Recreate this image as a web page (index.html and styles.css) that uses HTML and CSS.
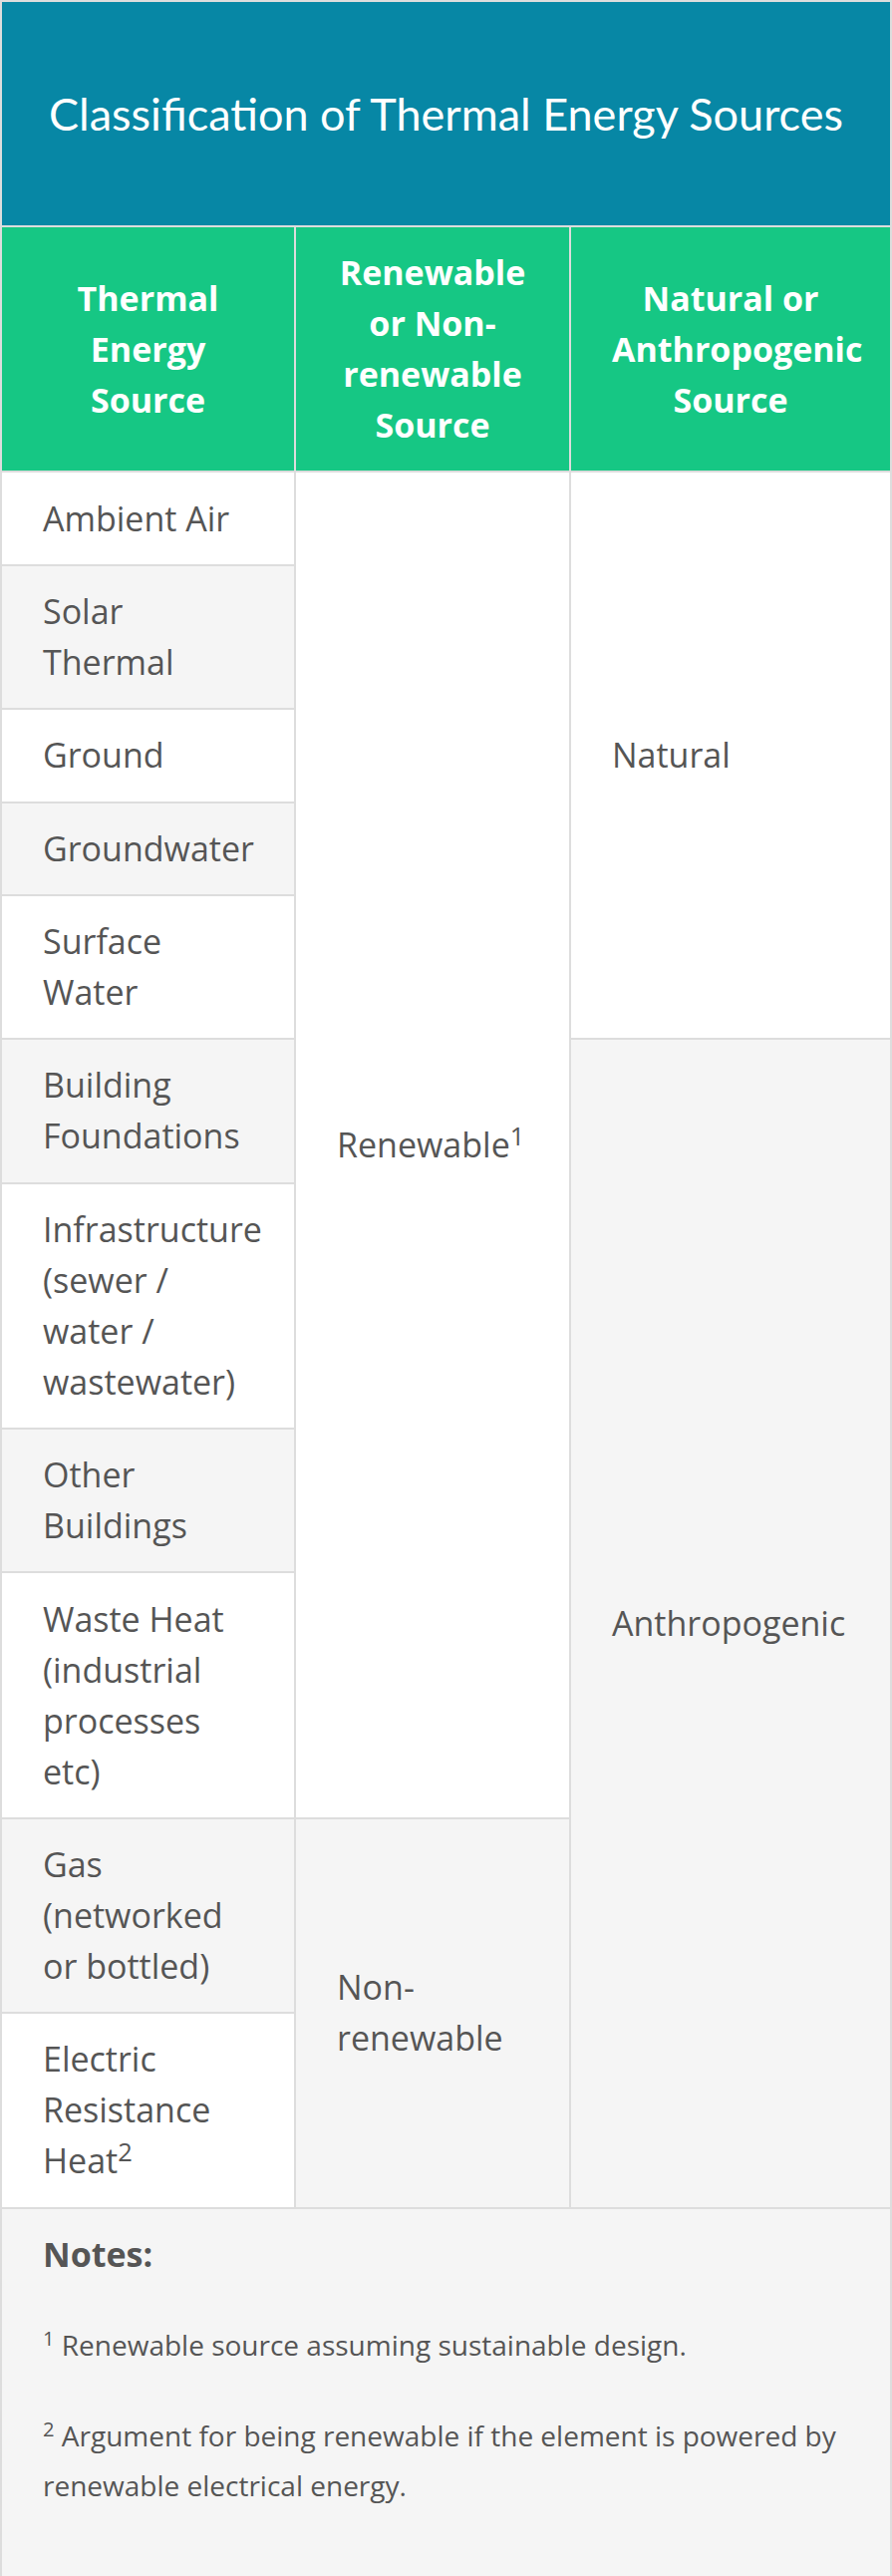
FILE: index.html
```html
<!DOCTYPE html>
<html lang="en">

<head>
  <meta charset="UTF-8" />
  <meta name="viewport" content="width=device-width, initial-scale=1.0" />
  <title>Classification of Thermal Energy Sources</title>
  <link rel="stylesheet" href="styles.css">
</head>

<body>

  <table class="energy-table">
    <colgroup>
      <col class="col-source">
      <col class="col-renew">
      <col class="col-origin">
    </colgroup>

    <thead>
      <tr>
        <th colspan="3" class="table-title">Classification of Thermal Energy Sources</th>
      </tr>
      <tr class="head-row">
        <th>Thermal Energy Source</th>
        <th>Renewable or Non-renewable Source</th>
        <th>Natural or Anthropogenic Source</th>
      </tr>
    </thead>

    <tbody>
      <tr>
        <td>Ambient Air</td>
        <td rowspan="9">Renewable<sup>1</sup></td>
        <td rowspan="5">Natural</td>
      </tr>
      <tr><td>Solar Thermal</td></tr>
      <tr><td>Ground</td></tr>
      <tr><td>Groundwater</td></tr>
      <tr><td>Surface Water</td></tr>
      <tr>
        <td>Building Foundations</td>
        <td rowspan="6">Anthropogenic</td>
      </tr>
      <tr><td>Infrastructure (sewer / water / wastewater)</td></tr>
      <tr><td>Other Buildings</td></tr>
      <tr><td>Waste Heat (industrial processes etc)</td></tr>
      <tr>
        <td>Gas (networked or bottled)</td>
        <td rowspan="2">Non-renewable</td>
      </tr>
      <tr><td>Electric Resistance Heat<sup>2</sup></td></tr>
    </tbody>

    <!-- notes under the table -->
    <tfoot>
      <tr>
        <td colspan="3" class="notes">
          <p class="notes-title">Notes:</p>
          <p><sup>1</sup> Renewable source assuming sustainable design.</p>
          <p><sup>2</sup> Argument for being renewable if the element is powered by renewable electrical energy.</p>
        </td>
      </tr>
    </tfoot>
  </table>

</body>

</html>
```

FILE: styles.css
```css
* {
  box-sizing: border-box;
}
body {
  margin: 0;
  font-family: 'Open Sans', sans-serif;
  color: #555;
  background: #fff;
}
.energy-table {
  width: 100%;
  border-collapse: collapse;
  table-layout: fixed;
  font-size: 34px;
  line-height: 51px;
}
.col-source {
  width: 295px;
}
.col-renew {
  width: 276px;
}
.energy-table th,
.energy-table td {
  border: 2px solid #ddd;
  padding: 20.2px 41px;
  vertical-align: middle;
  text-align: left;
  font-weight: normal;
}
.table-title {
  background-color: #0787a5;
  color: #fff;
  font-family: 'Lato', sans-serif;
  font-size: 45px;
  line-height: 64px;
  padding: 80px 20px !important;
  text-align: center !important;
}
.head-row th {
  background-color: #16c784;
  color: #fff;
  font-weight: bold;
  text-align: center;
}
tbody tr:nth-child(even) td {
  background-color: #f5f5f5;
}
sup {
  font-size: 0.75em;
  line-height: 0;
}
.energy-table .notes {
  background-color: #f5f5f5;
  font-size: 28px;
  line-height: 50px;
  padding-bottom: 25px;
}
.notes p {
  margin: 0 0 41px;
}
.notes .notes-title {
  font-size: 34px;
  font-weight: bold;
}
.notes sup {
  font-size: 0.72em;
}
```
